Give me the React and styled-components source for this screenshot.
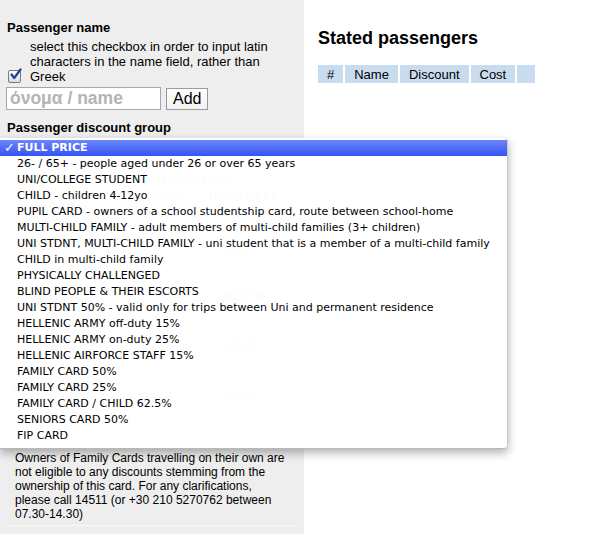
import React from "react";
import styled, { createGlobalStyle } from "styled-components";

const GlobalStyle = createGlobalStyle`
  html, body {
    margin: 0;
    padding: 0;
    background: #fff;
  }
  body {
    font-family: "Liberation Sans", Arial, sans-serif;
    font-size: 13px;
    color: #000;
  }
`;

const discountOptions = [
  "FULL PRICE",
  "26- / 65+ - people aged under 26 or over 65 years",
  "UNI/COLLEGE STUDENT",
  "CHILD - children 4-12yo",
  "PUPIL CARD - owners of a school studentship card, route between school-home",
  "MULTI-CHILD FAMILY - adult members of multi-child families (3+ children)",
  "UNI STDNT, MULTI-CHILD FAMILY - uni student that is a member of a multi-child family",
  "CHILD in multi-child family",
  "PHYSICALLY CHALLENGED",
  "BLIND PEOPLE & THEIR ESCORTS",
  "UNI STDNT 50% - valid only for trips between Uni and permanent residence",
  "HELLENIC ARMY off-duty 15%",
  "HELLENIC ARMY on-duty 25%",
  "HELLENIC AIRFORCE STAFF 15%",
  "FAMILY CARD 50%",
  "FAMILY CARD 25%",
  "FAMILY CARD / CHILD 62.5%",
  "SENIORS CARD 50%",
  "FIP CARD",
];

const familyRows = [
  { who: "Parents", single: "50 %", ret: "62.5 %" },
  { who: "Children", single: "", ret: "62.5 %" },
  { who: "Parents", single: "50 %", ret: "50 %" },
  { who: "Children up to 20yo", single: "20 %", ret: "20 %" },
];

const Page = styled.div`
  display: flex;
  min-height: 534px;
`;

const LeftPanel = styled.div`
  width: 304px;
  flex-shrink: 0;
  background: #eeeeee;
  padding: 20px 0 0 6px;
  box-sizing: border-box;
`;

const Heading = styled.div`
  font-weight: bold;
  font-size: 13px;
  line-height: 15px;
  margin-left: 1px;
`;

const CheckRow = styled.label`
  display: flex;
  align-items: flex-end;
  margin-top: 4px;
`;

const CheckBox = styled.span`
  width: 11px;
  height: 11px;
  margin: 0 9px 1px 2px;
  border: 1px solid #7a7a7a;
  border-radius: 2px;
  background: linear-gradient(#ffffff, #dcdcdc);
  flex-shrink: 0;
  position: relative;
`;

const CheckText = styled.span`
  max-width: 250px;
  line-height: 15px;
`;

const InputRow = styled.div`
  display: flex;
  align-items: center;
  gap: 5px;
  margin-top: 3px;
`;

const NameInput = styled.input`
  width: 155px;
  height: 23px;
  box-sizing: border-box;
  border: 1px solid #a7a7a7;
  background: #fff;
  font-family: "Liberation Sans", Arial, sans-serif;
  font-weight: bold;
  font-size: 17.5px;
  padding: 0 3px;
  outline: none;
  &::placeholder {
    color: #b4b4b4;
  }
`;

const AddButton = styled.button`
  height: 22px;
  padding: 0 6px;
  border: 1px solid #9a9a9a;
  background: linear-gradient(#ffffff, #f1f1f1);
  font-family: "Liberation Sans", Arial, sans-serif;
  font-size: 16px;
  color: #000;
  border-radius: 0;
`;

const GroupHeading = styled(Heading)`
  margin-top: 10px;
`;

const SelectWrap = styled.div`
  position: relative;
  height: 18px;
  margin-top: 4px;
`;

const Menu = styled.ul`
  position: absolute;
  top: -1px;
  left: -6px;
  width: 508px;
  margin: 0;
  padding: 2px 0 4px;
  list-style: none;
  background: rgba(255, 255, 255, 0.97);
  border-right: 1px solid #c8c8c8;
  border-bottom: 1px solid #b8b8b8;
  border-radius: 0 4px 4px 0;
  box-shadow: 0 4px 10px rgba(0, 0, 0, 0.3);
  box-sizing: border-box;
  z-index: 5;
`;

const MenuItem = styled.li`
  position: relative;
  height: 16px;
  line-height: 16px;
  padding-left: 17px;
  font-family: "DejaVu Sans", Verdana, sans-serif;
  font-size: 11px;
  white-space: nowrap;
  color: ${(p) => (p.selected ? "#fff" : "#000")};
  font-weight: ${(p) => (p.selected ? "bold" : "normal")};
  background: ${(p) =>
    p.selected ? "linear-gradient(#6c86fb, #3553f5)" : "transparent"};
`;

const Tick = styled.span`
  position: absolute;
  left: 4px;
  top: 0;
  font-size: 13px;
`;

const FamilyTable = styled.table`
  margin-top: 14px;
  width: 285px;
  border-collapse: collapse;
  color: #777;
  td,
  th {
    text-align: center;
    font-weight: normal;
    padding: 1px 4px;
    vertical-align: middle;
  }
`;

const ValueRow = styled.tr`
  height: 50px;
`;

const Notice = styled.div`
  width: 289px;
  box-sizing: border-box;
  margin-top: 31px;
  padding: 0 8px 4px 9px;
  font-size: 12px;
  line-height: 14px;
  border-bottom: 1px solid #f8f8f8;
`;

const RightPanel = styled.div`
  flex: 1;
  padding: 28px 0 0 14px;
`;

const Title = styled.h2`
  margin: 0;
  font-size: 18px;
  line-height: 20px;
  font-weight: bold;
`;

const PassengerTable = styled.table`
  margin-top: 15px;
  border-spacing: 2px;
  margin-left: -2px;
  th {
    background: #c9dcef;
    font-weight: normal;
    font-size: 13px;
    height: 18px;
    padding: 0 9px;
  }
`;

export default function App() {
  return (
    <>
      <GlobalStyle />
      <Page>
        <LeftPanel>
          <Heading>Passenger name</Heading>
          <CheckRow>
            <CheckBox>
              <svg width="13" height="13" viewBox="0 0 13 13" style={{ position: "absolute", left: 0, top: -3 }}>
                <path d="M2.5 6.5 L5.2 10 L11.5 1.5" fill="none" stroke="#1e3f9a" strokeWidth="2.2" strokeLinecap="round" strokeLinejoin="round" />
              </svg>
            </CheckBox>
            <CheckText>
              select this checkbox in order to input latin characters in the
              name field, rather than Greek
            </CheckText>
          </CheckRow>
          <InputRow>
            <NameInput placeholder="όνομα / name" />
            <AddButton>Add</AddButton>
          </InputRow>
          <GroupHeading>Passenger discount group</GroupHeading>
          <SelectWrap>
            <Menu>
              {discountOptions.map((opt, i) => (
                <MenuItem key={opt} selected={i === 0}>
                  {i === 0 && <Tick>✓</Tick>}
                  {opt}
                </MenuItem>
              ))}
            </Menu>
          </SelectWrap>
          <FamilyTable>
            <thead>
              <tr>
                <th />
                <th colSpan={2}>Family Card</th>
              </tr>
              <tr>
                <th>Passengers</th>
                <th>Discount for single trips</th>
                <th>Discount for return trips</th>
              </tr>
            </thead>
            <tbody>
              {familyRows.map((r, i) => (
                <ValueRow key={i}>
                  <td>{r.who}</td>
                  <td>{r.single}</td>
                  <td>{r.ret}</td>
                </ValueRow>
              ))}
            </tbody>
          </FamilyTable>
          <Notice>
            Owners of Family Cards travelling on their own are not eligible to
            any discounts stemming from the ownership of this card. For any
            clarifications, please call 14511 (or +30 210 5270762 between
            07.30-14.30)
          </Notice>
        </LeftPanel>
        <RightPanel>
          <Title>Stated passengers</Title>
          <PassengerTable>
            <thead>
              <tr>
                <th>#</th>
                <th>Name</th>
                <th>Discount</th>
                <th>Cost</th>
                <th />
              </tr>
            </thead>
          </PassengerTable>
        </RightPanel>
      </Page>
    </>
  );
}
